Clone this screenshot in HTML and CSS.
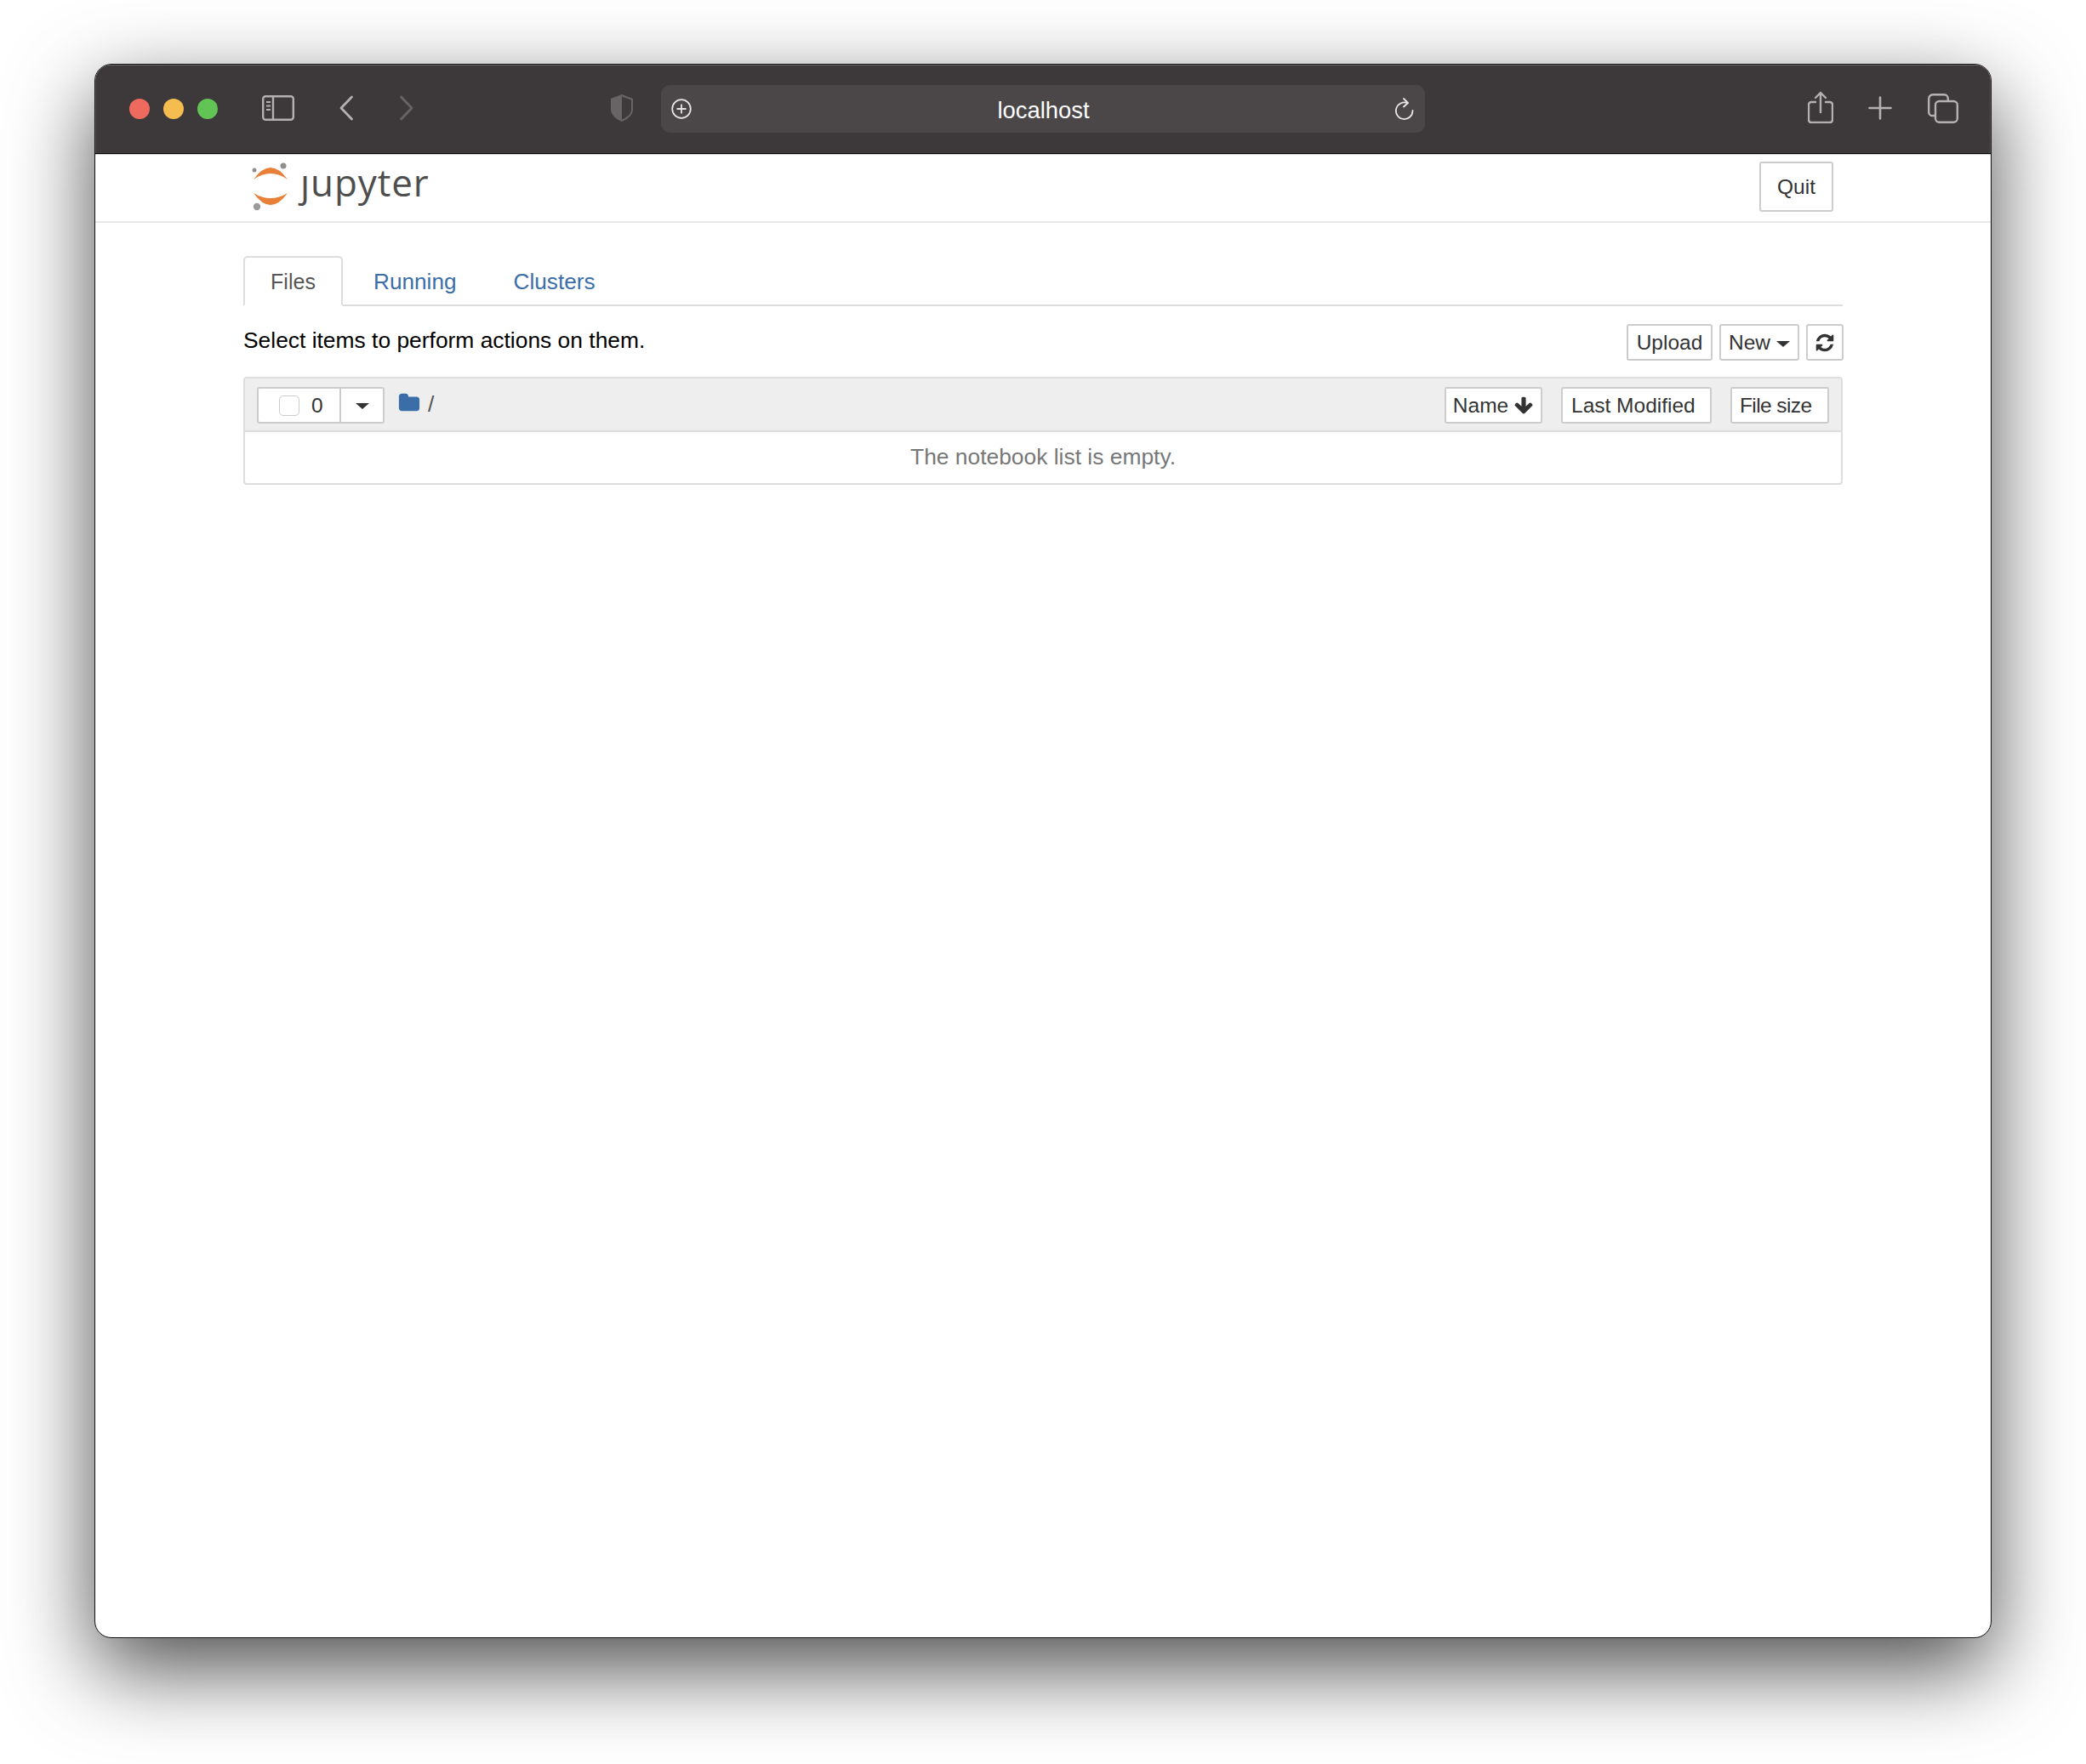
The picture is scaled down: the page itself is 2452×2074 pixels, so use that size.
FILE: index.html
```html
<!DOCTYPE html>
<html lang="en">
<head>
<meta charset="utf-8">
<title>localhost</title>
<link rel="stylesheet" href="styles.css">
</head>
<body>
<div class="window">
  <div class="titlebar">
    <span class="light red"></span><span class="light yellow"></span><span class="light green"></span>
    <svg class="ic-sidebar" width="38" height="30" viewBox="0 0 38 30" fill="none" stroke="#b5b1b1" stroke-width="2.4"><rect x="1.2" y="1.2" width="35.6" height="27.6" rx="3"/><path d="M13 1v28"/><path d="M5 8h5M5 12.500h5M5 17h5" stroke-width="1.800"/></svg>
    <svg class="ic-back" width="18" height="30" viewBox="0 0 18 30" fill="none" stroke="#b5b1b1" stroke-width="2.800" stroke-linecap="round" stroke-linejoin="round"><path d="M15.500 2 3 15l12.500 13"/></svg>
    <svg class="ic-forward" width="18" height="30" viewBox="0 0 18 30" fill="none" stroke="#686465" stroke-width="2.800" stroke-linecap="round" stroke-linejoin="round"><path d="M2.500 2 15 15 2.500 28"/></svg>
    <svg class="ic-shield" width="28" height="34" viewBox="0 0 28 34"><path d="M14 1 27 6v13c0 6-6 11-13 14C7 30 1 25 1 19V6z" fill="#686465"/><path d="M14 3.500 25 7.500V19c0 5-5 9-11 11.500z" fill="#3e3a3b"/></svg>
    <div class="urlbar">
      <svg class="ic-plus-circle" width="24" height="24" viewBox="0 0 24 24" fill="none" stroke="#e6e4e4" stroke-width="1.800"><circle cx="12" cy="12" r="10.800"/><path d="M12 6.500v11M6.500 12h11"/></svg>
      <span class="url">localhost</span>
      <svg class="ic-reload" width="22" height="26" viewBox="0 0 22 26" fill="none" stroke="#e6e4e4" stroke-width="1.800" stroke-linecap="round" stroke-linejoin="round"><path d="M14.500 6.200A9.800 9.800 0 1 0 20.500 15"/><path d="M10 1l5 5-5 4.500"/></svg>
    </div>
    <svg class="ic-share" width="30" height="38" viewBox="0 0 30 38" fill="none" stroke="#b5b1b1" stroke-width="2.400" stroke-linecap="round" stroke-linejoin="round"><path d="M9 13H4a3 3 0 0 0-3 3v18a3 3 0 0 0 3 3h22a3 3 0 0 0 3-3V16a3 3 0 0 0-3-3h-5"/><path d="M15 25V2M9 8l6-6 6 6"/></svg>
    <svg class="ic-new" width="28" height="28" viewBox="0 0 28 28" fill="none" stroke="#b5b1b1" stroke-width="2.600" stroke-linecap="round"><path d="M14 1.500v25M1.500 14h25"/></svg>
    <svg class="ic-tabs" width="36" height="35" viewBox="0 0 36 35" fill="none" stroke="#b5b1b1" stroke-width="2.400"><path d="M8 26H6a4 4 0 0 1-4.800-4V6A4.800 4.800 0 0 1 6 1.200h13A4.800 4.800 0 0 1 23.800 6v2"/><rect x="9" y="9" width="25.800" height="24.800" rx="4.500"/></svg>
  </div>
  <div class="page">
    <header class="site-header">
      <div class="brand">
        <svg class="logo" width="48" height="60" viewBox="0 0 48 60"><path d="M4 21Q24-7 44 21Q24 7 4 21Z" fill="#e8803a"/><path d="M4 37Q24 65 44 37Q24 49 4 37Z" fill="#e8803a"/><circle cx="39" cy="5" r="3.500" fill="#8f8f8f"/><circle cx="5" cy="10" r="2.500" fill="#8f8f8f"/><circle cx="8" cy="53" r="4.200" fill="#9a9a9a"/></svg>
        <span class="wordmark">ȷupyter</span>
      </div>
      <a class="btn btn-quit">Quit</a>
    </header>
    <main class="content">
      <nav class="tabs">
        <a class="tab active">Files</a>
        <a class="tab">Running</a>
        <a class="tab">Clusters</a>
      </nav>
      <div class="actions">
        <span class="hint">Select items to perform actions on them.</span>
        <div class="action-btns">
          <a class="btn btn-upload">Upload</a>
          <a class="btn btn-new">New<i class="caret"></i></a>
          <a class="btn btn-refresh"><svg width="24" height="24" viewBox="0 0 1792 1792"><path fill="#333" d="M1639 1056q0 5-1 7-64 268-268 434.500t-478 166.500q-146 0-282.500-55t-243.500-157l-129 129q-19 19-45 19t-45-19-19-45v-448q0-26 19-45t45-19h448q26 0 45 19t19 45-19 45l-137 137q71 66 161 102t187 36q134 0 250-65t186-179q11-17 53-117 8-23 30-23h192q13 0 22.500 9.500t9.500 22.500zm25-800v448q0 26-19 45t-45 19h-448q-26 0-45-19t-19-45 19-45l138-138q-148-137-349-137-134 0-250 65t-186 179q-11 17-53 117-8 23-30 23h-199q-13 0-22.500-9.500t-9.500-22.500v-7q65-268 270-434.500t480-166.500q146 0 284 55.500t245 156.500l130-129q19-19 45-19t45 19 19 45z"/></svg></a>
        </div>
      </div>
      <section class="panel">
        <div class="panel-head">
          <div class="select-group">
            <span class="select-count"><i class="checkbox"></i><span class="count">0</span></span>
            <span class="select-caret"><i class="caret"></i></span>
          </div>
          <svg class="folder" width="26" height="26" viewBox="0 0 1792 1792"><path fill="#3b6ea8" d="M1728 608v704q0 92-66 158t-158 66h-1216q-92 0-158-66t-66-158v-960q0-92 66-158t158-66h320q92 0 158 66t66 158v32h672q92 0 158 66t66 158z"/></svg>
          <span class="slash">/</span>
          <div class="sorts">
            <a class="btn btn-name">Name<svg width="24" height="24" viewBox="0 0 1792 1792"><path fill="#333" d="M1675 832q0 53-37 90l-651 652q-39 37-91 37-53 0-90-37l-651-652q-38-36-38-90 0-53 38-91l74-75q39-37 91-37 53 0 90 37l294 294v-704q0-52 38-90t90-38h128q52 0 90 38t38 90v704l294-294q37-37 90-37 52 0 91 37l75 75q37 39 37 91z"/></svg></a>
            <a class="btn btn-modified">Last Modified</a>
            <a class="btn btn-size">File size</a>
          </div>
        </div>
        <div class="panel-empty">The notebook list is empty.</div>
      </section>
    </main>
  </div>
</div>
</body>
</html>
```

FILE: styles.css
```css
* { box-sizing: border-box; }
html, body { margin: 0; height: 2074px; overflow: hidden; background: #fff; }
body {
  padding: 75px 0 0 111px;
  font-family: "Liberation Sans", Arial, sans-serif;
  font-size: 24.5px;
  color: #333;
}
.window {
  width: 2230px;
  height: 1851px;
  background: #fff;
  border: 1px solid #111;
  border-radius: 20px;
  box-shadow: 0 36px 100px rgba(0, 0, 0, .7);
  overflow: hidden;
  display: flex;
  flex-direction: column;
}
.titlebar {
  flex: none;
  height: 105px;
  background: #3d393a;
  border-bottom: 1px solid #000;
  box-shadow: inset 0 1px 0 #6e6a6b, inset 1px 0 0 #5c5859, inset -1px 0 0 #5c5859;
  display: flex;
  align-items: center;
  padding: 0 0 2px 40px;
}
.light { width: 24px; height: 24px; border-radius: 50%; margin-top: 1px; margin-right: 16px; flex: none; }
.red { background: #ee6a5f; }
.yellow { background: #f5bd4f; }
.green { background: #61c454; }
.ic-sidebar { margin-left: 36px; flex: none; }
.ic-back { margin-left: 52px; flex: none; }
.ic-forward { margin-left: 53px; flex: none; }
.ic-shield { margin-left: 230px; flex: none; }
.urlbar {
  margin-left: 32px;
  width: 898px;
  height: 56px;
  flex: none;
  background: #4b4748;
  border-radius: 10px;
  display: flex;
  align-items: center;
  justify-content: space-between;
  padding: 0 13px 0 12px;
  position: relative;
  margin-top: 1px;
}
.url { color: #fff; font-size: 27.4px; margin-top: 5px; }
.ic-share { margin-left: 450px; margin-top: -2px; flex: none; }
.ic-new { margin-left: 41px; flex: none; }
.ic-tabs { margin-left: 42px; flex: none; }

.page { flex: 1; display: flex; flex-direction: column; border-top: 1px solid #ccc; }
.site-header {
  flex: none;
  height: 80px;
  border-bottom: 2px solid #e7e7e7;
  padding: 8px 185px 0 182px;
  display: flex;
  align-items: flex-start;
  justify-content: space-between;
}
.brand { display: flex; align-items: flex-start; }
.logo { flex: none; margin-top: 0; }
.wordmark {
  margin-left: 11px;
  margin-top: -6px;
  font-family: "Open Sans", sans-serif;
  font-size: 44px;
  line-height: 60px;
  color: #4e4e4e;
  letter-spacing: .9px;
}
.btn {
  display: inline-flex;
  align-items: center;
  justify-content: center;
  background: #fff;
  border: 2px solid #ccc;
  border-radius: 3px;
  color: #333;
  height: 43px;
}
.btn-quit { width: 87px; height: 59px; }
.content { width: 1880px; margin-left: 174px; }
.tabs { display: flex; margin-top: 39px; height: 59px; border-bottom: 2px solid #ddd; font-size: 26.2px; }
.tab { height: 59px; padding: 15px 0 0; color: #3b6ea8; }
.tab:nth-child(1) { width: 117px; padding-top: 14px; text-align: center; color: #555; font-size: 25px; background: #fff; border: 2px solid #ddd; border-bottom-color: #fff; border-radius: 5px 5px 0 0; }
.tab:nth-child(2) { margin-left: 36px; }
.tab:nth-child(3) { margin-left: 67px; }
.actions { display: flex; justify-content: space-between; align-items: flex-start; padding-top: 21px; height: 83px; }
.hint { color: #000; font-size: 26.4px; margin-top: 4px; }
.action-btns { display: flex; gap: 8px; margin-right: -1px; }
.btn-upload { width: 101px; }
.btn-new { width: 94px; }
.btn-refresh { width: 44px; }
.caret { display: inline-block; width: 0; height: 0; border-style: solid; border-width: 7px 8px 0; border-color: #333 transparent transparent; }
.btn-new .caret { margin-left: 7px; margin-top: 3px; }
.panel { height: 127px; border: 2px solid #ddd; border-radius: 4px; }
.panel-head { height: 63px; background: #eee; border-bottom: 2px solid #ddd; display: flex; align-items: flex-start; padding: 10px 14px 0 14px; }
.select-group { display: flex; width: 150px; height: 43px; border: 2px solid #ccc; border-radius: 3px; background: #fff; flex: none; }
.select-count { width: 97px; border-right: 2px solid #ccc; display: flex; align-items: center; padding-left: 24px; }
.checkbox { display: block; width: 24px; height: 24px; border: 1px solid #ccc; border-radius: 5px; background: #fff; }
.count { margin-left: 14px; }
.select-caret { flex: 1; display: flex; align-items: center; justify-content: center; padding-top: 2px; }
.folder { margin-left: 16px; margin-top: 6px; flex: none; }
.slash { margin-left: 9px; margin-top: 5px; color: #555; font-size: 26.4px; }
.sorts { margin-left: auto; display: flex; }
.btn-name { width: 115px; gap: 6px; }
.btn-modified { width: 177px; margin-left: 22px; justify-content: flex-start; padding-left: 10px; }
.btn-size { width: 116px; margin-left: 22px; justify-content: flex-start; padding-left: 9px; letter-spacing: -.6px; }
.panel-empty { text-align: center; color: #777; padding-top: 14px; font-size: 26.4px; }
```
